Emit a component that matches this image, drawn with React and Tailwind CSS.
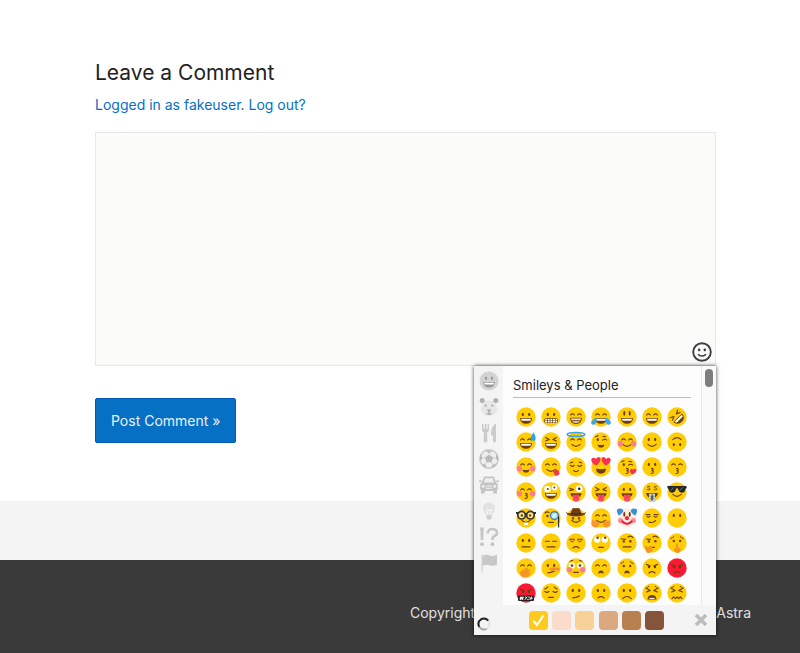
import React, { useState } from 'react';

const BROWN = '#6f3f08';
const YELLOW = '#ffcd05';

const line = {
  fill: 'none',
  stroke: BROWN,
  strokeWidth: 1.15,
  strokeLinecap: 'round',
  strokeLinejoin: 'round',
};

const eyes = {
  dots: (
    <g fill={BROWN}>
      <ellipse cx="6.8" cy="7.4" rx="1.1" ry="1.7" />
      <ellipse cx="13.2" cy="7.4" rx="1.1" ry="1.7" />
    </g>
  ),
  tall: (
    <g fill={BROWN}>
      <ellipse cx="7.3" cy="6.2" rx="1" ry="2.5" />
      <ellipse cx="12.7" cy="6.2" rx="1" ry="2.5" />
    </g>
  ),
  happy: <path {...line} d="M4.6 8Q6.5 5.6 8.4 8M11.6 8Q13.5 5.6 15.4 8" />,
  closed: <path {...line} d="M4.4 8.4Q6.4 10.4 8.2 8.4M11.8 8.4Q13.6 10.4 15.6 8.4M4.4 6L6.8 5M15.6 6L13.2 5" />,
  squint: <path {...line} d="M4.6 5.6L8.2 7.4L4.6 9M15.4 5.6L11.8 7.4L15.4 9" />,
  wink: (
    <g>
      <ellipse cx="6.8" cy="7.6" rx="1.1" ry="1.6" fill={BROWN} />
      <path {...line} d="M11.6 8.2Q13.4 6.4 15.6 8M4.6 4.8L7 3.8M12 4.4L14.6 4.8" />
    </g>
  ),
  hearts: (
    <g fill="#f9324f">
      <path d="M5.2 8.6C1 6.6-.6 3.6.8 1.6C2.2 0 4.2.8 4.8 2.2C6-.2 8.8-.2 9.4 1.8C9.8 4.4 7.6 7 5.2 8.6Z" />
      <path d="M14.8 8.6C19 6.6 20.6 3.6 19.2 1.6C17.8 0 15.8.8 15.2 2.2C14-.2 11.2-.2 10.6 1.8C10.2 4.4 12.4 7 14.8 8.6Z" />
    </g>
  ),
  crazy: (
    <g>
      <circle cx="6.4" cy="7" r="3.3" fill="#fff" />
      <circle cx="13.6" cy="5.6" r="2.8" fill="#fff" />
      <circle cx="6.8" cy="7" r="1" fill={BROWN} />
      <circle cx="13.4" cy="5.6" r="1" fill={BROWN} />
    </g>
  ),
  winkWide: (
    <g>
      <path {...line} d="M3.6 6.2L7.6 7.6L3.8 8.6" />
      <circle cx="13.2" cy="6.8" r="3.4" fill="#fff" />
      <circle cx="13.2" cy="6.8" r="1.3" fill="#222" />
    </g>
  ),
  money: <path {...line} strokeWidth=".8" d="M8 4.4Q5.4 3.6 5.4 5Q5.6 6 6.800 6Q8.400 6.400 8 7.600Q7.200 8.400 5.200 7.600M14.800 4.400Q12.200 3.600 12.200 5Q12.400 6 13.600 6Q15.200 6.400 14.800 7.600Q14 8.400 12 7.600" />,
  flat: <path {...line} d="M4.4 8.2H8.4M11.6 8.2H15.6" />,
  bored: (
    <g>
      <path {...line} d="M3.8 6.2H8.4M11.6 6.2H16.2" />
      <path {...line} strokeWidth="1" d="M4.4 7.6Q6.2 10.4 8 7.6M12 7.6Q13.8 10.4 15.6 7.6" />
    </g>
  ),
  smirk: <path {...line} d="M4 6.600L8 6.600M5 8.800Q6.600 9.600 8 8.400M16 6.600L12 6.600M12 8.400Q13.400 9.600 15 8.800" />,
  roll: (
    <g>
      <circle cx="6.2" cy="6.6" r="3.2" fill="#fff" />
      <circle cx="13.8" cy="6.6" r="3.2" fill="#fff" />
      <circle cx="6.6" cy="4.7" r="1.2" fill={BROWN} />
      <circle cx="14.2" cy="4.7" r="1.2" fill={BROWN} />
    </g>
  ),
  raised: (
    <g>
      <circle cx="6.8" cy="8.4" r="1.2" fill={BROWN} />
      <circle cx="13.4" cy="8.2" r="1.2" fill={BROWN} />
      <path {...line} d="M4.4 6L8.4 6.4M11 4Q13.6 1.8 16 4.6" />
    </g>
  ),
  worried: (
    <g>
      <circle cx="6.8" cy="8" r="1.2" fill={BROWN} />
      <circle cx="13.2" cy="8" r="1.2" fill={BROWN} />
      <path {...line} strokeWidth="1" d="M3.8 5.6Q5.4 5 6.8 3.6M16.2 5.6Q14.6 5 13.2 3.6" />
    </g>
  ),
  flushed: (
    <g>
      <circle cx="5.8" cy="7.6" r="3.2" fill="#fff" />
      <circle cx="14.2" cy="7.6" r="3.2" fill="#fff" />
      <circle cx="6" cy="7.6" r="1.3" fill={BROWN} />
      <circle cx="14" cy="7.6" r="1.3" fill={BROWN} />
      <path {...line} strokeWidth="1" d="M4 3.2L6.6 2.4M16 3.2L13.4 2.4" />
    </g>
  ),
  sad: <path {...line} d="M3.8 8.4Q5.8 10.4 8 8.4M12 8.4Q14.2 10.4 16.2 8.4M3.8 6Q5.8 5.4 6.8 4M16.2 6Q14.2 5.4 13.2 4" />,
  angry: (
    <g>
      <circle cx="7" cy="9" r="1.2" fill={BROWN} />
      <circle cx="13" cy="9" r="1.2" fill={BROWN} />
      <path {...line} strokeWidth="1.2" d="M4.4 6.4L8.4 8M15.6 6.4L11.6 8" />
    </g>
  ),
};

const mouths = {
  grin: (
    <g>
      <path fill={BROWN} d="M4 11H16Q15.6 16.8 10 16.8Q4.4 16.8 4 11Z" />
      <path fill="#fff" d="M5 11.7H15L14.4 13.8H5.6Z" />
    </g>
  ),
  beam: (
    <g>
      <path fill={BROWN} d="M4 10.8H16Q15.6 17 10 17Q4.4 17 4 10.8Z" />
      <path fill="#f3dfc4" d="M5 11.6H15L14.6 13.2H5.4ZM5.9 14.2H14.1Q12.6 16 10 16Q7.4 16 5.9 14.2Z" />
    </g>
  ),
  grimace: (
    <g>
      <rect x="3.2" y="11" width="13.6" height="5" rx="2" fill={BROWN} />
      <path stroke="#fff" strokeWidth="1.7" strokeDasharray="1.9 .7" d="M4.2 12.5H16M4.2 14.6H16" />
    </g>
  ),
  heartGrin: <path fill={BROWN} d="M5 11.6Q10 12.8 15 11.6Q14.6 16.8 10 16.8Q5.4 16.8 5 11.6Z" />,
  smallGrin: <path fill={BROWN} d="M6.600 12.400Q10 13.400 13.400 12.400Q12.800 15.600 10 15.600Q7.200 15.600 6.600 12.400Z" />,
  smile: <path {...line} d="M5.8 12.4Q10 16.2 14.2 12.4" />,
  small: <path {...line} d="M7.4 13.6Q10 15.4 12.6 13.6" />,
  frown: <path {...line} d="M5.8 15.6Q10 11.4 14.2 15.6" />,
  smallFrown: <path {...line} d="M7 15Q10 12.4 13 15" />,
  open: <path fill={BROWN} d="M7.2 15.4Q7.4 12.4 10 12.4Q12.6 12.4 12.8 15.4Q10 14.4 7.2 15.4Z" />,
  flat: <path {...line} d="M6 13.8H14" />,
  short: <path {...line} d="M7.6 14.4H12.4" />,
  slant: <path {...line} d="M6.8 14.8Q10 14.8 13.4 13" />,
  smirk: <path {...line} d="M6.8 14Q11 15.4 13.6 12.6" />,
  kiss: <path {...line} strokeWidth="1.1" d="M9.4 11.4Q12 11.6 11 13Q10.4 13.6 9.8 13.6Q11.8 13.9 11.2 15.4Q10.6 16.6 9.2 16.4" />,
  tongue: (
    <g>
      <path fill={BROWN} d="M4.4 11.2H15.6Q15 15.6 10 15.6Q5 15.6 4.4 11.2Z" />
      <path fill="#ff4668" d="M6.8 12.8H13.2V16.4Q13 19.6 10 19.6Q7 19.6 6.8 16.4Z" />
      <path stroke="#d62d50" strokeWidth=".8" d="M10 13V17" />
    </g>
  ),
  money: (
    <g>
      <path fill={BROWN} d="M4 11H16Q15 16.4 10 16.4Q5 16.4 4 11Z" />
      <path fill="#c9cdc5" d="M7 11.6H13V20H7Z" />
      <path {...line} stroke="#3d4942" strokeWidth="1" d="M11.2 14.2Q9 13.4 9 14.8Q11.4 15.4 11.2 16.8Q10.4 17.6 8.8 17M10 13V18.2" />
    </g>
  ),
  squiggle: <path {...line} d="M5 15.6L6.8 13.8L8.6 15.6L10.2 13.8L11.8 15.6L13.4 13.8L15 15.6" />,
  weary: (
    <g>
      <path fill={BROWN} d="M5.4 16.4Q6 12 10 12Q14 12 14.6 16.4Z" />
      <path stroke="#fff" strokeWidth="1" d="M7.4 15.4H12.6" />
    </g>
  ),
};

const extras = {
  blush: (
    <g fill="#ff7c8e">
      <circle cx="3.4" cy="11.8" r="2.7" />
      <circle cx="16.6" cy="11.8" r="2.7" />
    </g>
  ),
  tears: (
    <g fill="#35a8ee">
      <path d="M5.4 10.6Q6 17.6 2.6 17.8Q-.8 17.4.6 14.2Q2 12.2 5.4 10.6Z" />
      <path d="M14.6 10.6Q14 17.6 17.4 17.8Q20.8 17.4 19.4 14.2Q18 12.2 14.6 10.6Z" />
    </g>
  ),
  sweat: <path fill="#29a3ef" d="M17.6.4Q21 6.2 19 8.2Q17 9.6 15 7.8Q13.8 5.4 17.6.4Z" />,
  halo: <ellipse cx="10" cy="2.4" rx="8.8" ry="1.9" fill="none" stroke="#39a4e8" strokeWidth="1.5" />,
  heart: <path fill="#f9324f" d="M15.4 17.6Q11.8 14.4 13.2 12.4Q14.8 11.2 16 12.8Q18 10.8 19.4 12.6Q20.2 15.4 15.4 17.6Z" />,
  lick: <path fill="#f9324f" d="M12.2 14.2L15.4 12.2Q18.8 14 18.4 17Q16.8 19.8 13.8 18.2Z" />,
  brows: <path {...line} strokeWidth="1" d="M3.800 5.200Q5.600 4.800 6.800 3.400M16.200 5.200Q14.400 4.800 13.200 3.400" />,
  shades: (
    <g>
      <path fill="#25282b" d="M.4 4H19.6V6L18.4 7Q18 11 14.6 10.8Q11.6 10.6 11 6.6H9Q8.4 10.6 5.4 10.8Q2 11 1.6 7L.4 6Z" />
      <path stroke="#68737b" d="M3.6 8.8L6.4 5.4M12.8 8.8L15.6 5.4" />
    </g>
  ),
  nerd: (
    <g>
      <circle cx="5.6" cy="7.2" r="3.8" fill="#ffe27a" stroke="#333235" strokeWidth="1.7" />
      <circle cx="14.4" cy="7.2" r="3.8" fill="#ffe27a" stroke="#333235" strokeWidth="1.7" />
      <path stroke="#333235" strokeWidth="1.8" d="M0 5H3M17 5H20M9 6H11" />
      <circle cx="5.9" cy="7.4" r="1.2" fill={BROWN} />
      <circle cx="14.1" cy="7.4" r="1.2" fill={BROWN} />
      <path fill="#fff" d="M8 14.5H12V17H8Z" />
    </g>
  ),
  monocle: (
    <g>
      <circle cx="13.4" cy="7.6" r="3.9" fill="#b9e5f9" stroke="#3e7fb0" strokeWidth="1.4" />
      <path stroke="#fff" strokeWidth="1.5" d="M12 9L15 6" />
      <path stroke="#333" strokeWidth="1.2" d="M17.6 8.4V19.6" />
      <path {...line} d="M4 5Q6 3 8 4.6" />
      <circle cx="6.4" cy="8" r="1.2" fill={BROWN} />
    </g>
  ),
  cowboy: (
    <g>
      <path fill="#6d3f1d" d="M0 3.4Q1.6 5.6 4.6 5.2L6.4.4Q8.4-.6 10 .6Q11.6-.6 13.6.4L15.4 5.2Q18.4 5.6 20 3.4Q19.8 8.4 10 8.4Q.2 8.4 0 3.4Z" />
      <path stroke="#3c230e" d="M4.7 5.3Q10 7.2 15.3 5.3" fill="none" />
    </g>
  ),
  hug: (
    <g fill="#f9952b">
      <path d="M1 11.6L3 13.6L4.2 11.4L5.6 13.4L8 14.2Q9 18.4 5.2 19.8Q.6 19.6.2 15.6Z" />
      <path d="M19 11.6L17 13.6L15.8 11.4L14.4 13.4L12 14.2Q11 18.4 14.8 19.8Q19.4 19.6 19.8 15.6Z" />
    </g>
  ),
  clown: (
    <g>
      <path fill="#3b91d4" d="M0 1.4Q4-.6 6.4 2.2Q5.8 5.6 1.8 7.6Q-.6 5 0 1.4ZM20 1.4Q16-.6 13.6 2.2Q14.2 5.6 18.2 7.6Q20.6 5 20 1.4Z" />
      <g fill="#ff8a97">
        <circle cx="3.6" cy="12.4" r="2.5" />
        <circle cx="16.4" cy="12.4" r="2.5" />
      </g>
      <path fill="none" stroke="#e9203f" strokeWidth="2.2" strokeLinecap="round" d="M5.4 13.4Q10 18.4 14.6 13.4" />
      <circle cx="10" cy="10.2" r="2.1" fill="#f02743" />
    </g>
  ),
  think: <path fill="#f59522" d="M3 12.4L5.6 14L11.4 12.8Q12.4 14 9.2 15L11 16.2Q9.8 20 6 20Q3 19.4 3 12.4Z" />,
  shush: <path fill="#f59522" d="M9 10.8Q10.4 10 11 11.6L11.4 14.4L13.6 15.6Q14 19.6 11 20Q7.2 20 7 16L9 14.6Z" />,
  hand: <path fill="#f59522" d="M4 14L9 10.4L12.6 9.4L10.8 12L15 11L12.8 13.4L15.4 13.6L12.8 15.8L14.4 16.4Q11 20 7.4 19.6Q4 18 4 14Z" />,
  nose: <path fill="#f78d2b" d="M8.6 9.8L18 9.6Q19.8 11.2 18 12.6L8.6 12.4Z" />,
  curse: (
    <g>
      <rect x="2" y="12.4" width="16" height="5.6" rx="1" fill="#28201f" />
      <path stroke="#fff" strokeWidth="1" fill="none" d="M5 13.6L4.4 16.8M7 13.6L6.4 16.8M3.8 14.6H7.4M3.6 15.9H7.2M8.8 16.8L11.2 13.6M9 14H9.8M11 16.4H11.8M13 13.6V15.2M13 16V17M15.4 13.6L14.8 16.8M14 15.2H16.6" />
    </g>
  ),
};

// [name, eyes, mouth, extras, options]
const emojis = [
  ['grinning', 'dots', 'grin'],
  ['grimacing', 'dots', 'grimace'],
  ['beaming', 'happy', 'beam'],
  ['tears of joy', 'happy', 'grin', ['tears']],
  ['big eyes', 'tall', 'grin'],
  ['smiling eyes', 'happy', 'grin'],
  ['rolling on the floor', 'squint', 'grin', [], { rotate: -45 }],

  ['sweat', 'happy', 'grin', ['sweat']],
  ['squinting', 'squint', 'grin'],
  ['halo', 'happy', 'smile', ['halo']],
  ['winking', 'wink', 'smallGrin'],
  ['blushing', 'happy', 'smile', ['blush']],
  ['slightly smiling', 'dots', 'smile'],
  ['upside down', 'dots', 'smile', [], { rotate: 180 }],

  ['smiling', 'happy', 'smallGrin', ['blush']],
  ['savoring food', 'happy', 'smile', ['lick']],
  ['relieved', 'closed', 'small'],
  ['heart eyes', 'hearts', 'heartGrin'],
  ['blowing a kiss', 'wink', 'kiss', ['heart']],
  ['kissing', 'dots', 'kiss'],
  ['kissing with smiling eyes', 'happy', 'kiss'],

  ['kissing with closed eyes', 'happy', 'kiss', ['blush']],
  ['zany', 'crazy', 'grin'],
  ['winking with tongue', 'winkWide', 'tongue'],
  ['squinting with tongue', 'squint', 'tongue'],
  ['tongue', 'dots', 'tongue'],
  ['money mouth', 'money', 'money'],
  ['sunglasses', null, 'smile', ['shades']],

  ['nerd', null, 'smile', ['nerd']],
  ['monocle', null, 'short', ['monocle']],
  ['cowboy hat', null, 'smile', ['cowboy'], { lowEyes: true }],
  ['hugging', 'happy', 'smile', ['hug']],
  ['clown', 'tall', null, ['clown'], { color: '#fbeee0' }],
  ['smirking', 'smirk', 'smirk'],
  ['no mouth', 'dots', null],

  ['neutral', 'dots', 'flat'],
  ['expressionless', 'flat', 'flat'],
  ['unamused', 'bored', 'smallFrown'],
  ['rolling eyes', 'roll', 'short'],
  ['raised eyebrow', 'raised', 'flat'],
  ['thinking', 'raised', 'short', ['think']],
  ['shushing', 'worried', null, ['shush']],

  ['hand over mouth', 'happy', null, ['hand']],
  ['lying', 'dots', 'slant', ['nose']],
  ['flushed', 'flushed', 'short', ['blush']],
  ['disappointed', 'happy', 'open'],
  ['worried', 'worried', 'open'],
  ['angry', 'angry', 'smallFrown'],
  ['pouting', 'angry', 'smallFrown', [], { color: '#fa1a35' }],

  ['cursing', 'angry', null, ['curse'], { color: '#fa1a35' }],
  ['pensive', 'sad', 'short'],
  ['confused', 'dots', 'slant'],
  ['slightly frowning', 'dots', 'smallFrown'],
  ['frowning', 'dots', 'frown'],
  ['persevering', 'squint', 'weary', ['brows']],
  ['confounded', 'squint', 'squiggle', ['brows']],
];

const tones = [
  { name: 'Default', color: 'bg-[#ffc91f]' },
  { name: 'Light', color: 'bg-[#fbdccb]' },
  { name: 'Medium light', color: 'bg-[#f7d198]' },
  { name: 'Medium', color: 'bg-[#dba97f]' },
  { name: 'Medium dark', color: 'bg-[#b9804f]' },
  { name: 'Dark', color: 'bg-[#855539]' },
];

const categories = [
  {
    name: 'Smileys & People',
    icon: (
      <g>
        <circle cx="10" cy="10" r="9.5" fill="#d3d3d3" />
        <g fill="#989898">
          <ellipse cx="7" cy="7.3" rx="1.1" ry="1.8" />
          <ellipse cx="13" cy="7.3" rx="1.1" ry="1.8" />
          <path d="M4 11H16Q15.4 16.6 10 16.6Q4.6 16.6 4 11Z" />
        </g>
        <path fill="#fff" d="M5 11.7H15L14.4 13.6H5.6Z" />
      </g>
    ),
  },
  {
    name: 'Animals & Nature',
    icon: (
      <g>
        <path fill="#e7e7e7" d="M4 5Q10 1.6 16 5L18.4 12Q18 18.6 10 18.8Q2 18.6 1.6 12Z" />
        <g fill="#b0b0b0">
          <circle cx="3.2" cy="3.4" r="2.5" />
          <circle cx="16.8" cy="3.4" r="2.5" />
          <circle cx="6.8" cy="8.6" r="1.2" />
          <circle cx="13.2" cy="8.6" r="1.2" />
          <path d="M7.4 12.6H12.6L10.7 15V16Q12.6 17.4 14 15.6Q13.4 18.2 10 18Q6.6 18.2 6 15.6Q7.4 17.4 9.3 16V15Z" />
        </g>
      </g>
    ),
  },
  {
    name: 'Food & Drink',
    icon: (
      <path fill="#cbcbcb" d="M3 1H4.6V6H5.8V1H7.4V6H8.6V1H10V7Q10 9 8 9.4L8.4 18Q8 19.6 6.5 19.6Q5 19.6 4.6 18L5 9.4Q3 9 3 7ZM17 .6V18.6Q16.4 19.6 15.4 19.6Q14 19.4 14 18V12.4H12Q11.6 3.6 17 .6Z" />
    ),
  },
  {
    name: 'Activity',
    icon: (
      <g>
        <circle cx="10" cy="10" r="9.2" fill="#eee" stroke="#c9c9c9" strokeWidth="1.4" />
        <path fill="#b9b9b9" d="M10 5.8L14 8.6L12.5 13.2H7.5L6 8.6ZM6 1.8H14L10 4ZM.8 8L3 5V10L1 12ZM19.2 8L17 5V10L19 12ZM4 14.6L7 16.4L7.4 19Q4.6 18 3.2 16ZM16 14.6L13 16.4L12.6 19Q15.4 18 16.8 16Z" />
        <path stroke="#d0d0d0" d="M10 4V6M3 9.4L6 8.6M17 9.4L14 8.6M7.5 13.2L6 16M12.5 13.2L14 16" />
      </g>
    ),
  },
  {
    name: 'Travel & Places',
    icon: (
      <g>
        <path fill="#c4c4c4" d="M5 1.6H15L17 7.4L18.8 9V14.6H18V18.4H14.4V16H5.6V18.4H2V14.6H1.2V9L3 7.4ZM0 5.4H3V7H0ZM17 5.4H20V7H17Z" />
        <path fill="#efefef" d="M6.2 3.2H13.8L15 7.4H5ZM6.8 10.4H13.2V11.6H6.8ZM6.8 12.8H13.2V13.8H6.8Z" />
        <circle cx="4.2" cy="11.2" r="1.5" fill="#ededed" />
        <circle cx="15.8" cy="11.2" r="1.5" fill="#ededed" />
      </g>
    ),
  },
  {
    name: 'Objects',
    icon: (
      <g>
        <path fill="#e2e2e2" d="M10 1.6Q15.8 2 16 7.6Q15.6 11 13 14H7Q4.4 11 4 7.6Q4.2 2 10 1.6Z" />
        <path fill="#cfcfcf" d="M7.4 14H12.6V17.4L11 18.8H9L7.4 17.4Z" />
        <path fill="none" stroke="#f8f8f8" d="M9 14L7.6 8.4L10 9.6L12.4 8.4L11 14" />
      </g>
    ),
  },
  {
    name: 'Symbols',
    icon: (
      <g>
        <path fill="#c4c4c4" d="M1.2.6H4.8L4.2 13H1.8Z" />
        <path fill="none" stroke="#c6c6c6" strokeWidth="2.6" d="M8.6 6.4Q9 2 13.4 2Q18 2.2 18 5.8Q17.8 8.2 15.2 9.2Q13.4 10 13.4 13" />
        <circle cx="3" cy="17.2" r="1.9" fill="#c4c4c4" />
        <circle cx="13.4" cy="17.2" r="1.9" fill="#c4c4c4" />
      </g>
    ),
  },
  {
    name: 'Flags',
    icon: (
      <g>
        <path stroke="#d4d4d4" strokeWidth="1.4" d="M3 1.5V19.5" />
        <path fill="#c8c8c8" d="M3.6 2.6Q7.4.8 11 2.4Q14.6 3.8 18 1.6V11.6Q14.4 13.8 10.8 12.2Q7.2 10.8 3.6 13Z" />
      </g>
    ),
  },
];

const Emoji = ({ eye, mouth, extra = [], options = {} }) => (
  <svg viewBox="0 0 20 20" className="h-5 w-5 overflow-visible" aria-hidden="true">
    <g transform={options.rotate ? `rotate(${options.rotate} 10 10)` : undefined}>
      <circle cx="10" cy="10" r="9.7" fill={options.color || YELLOW} />
      {options.lowEyes && (
        <g fill={BROWN}>
          <circle cx="7" cy="10.4" r="1.2" />
          <circle cx="13" cy="10.4" r="1.2" />
        </g>
      )}
      {eye && eyes[eye]}
      {mouth && mouths[mouth]}
      {extra.map((name) => (
        <g key={name}>{extras[name]}</g>
      ))}
    </g>
  </svg>
);

const EmojiPicker = ({ onPick, onClose }) => {
  const [tone, setTone] = useState('Default');

  return (
    <div className="absolute right-0 top-full z-10 w-[242px] bg-[#f4f4f4] shadow-[0_0_4px_rgba(0,0,0,0.75)]">
      <div className="flex h-[239px]">
        <nav className="flex w-[29px] flex-col items-center gap-[6px] pt-[5px]">
          {categories.map((category) => (
            <button key={category.name} type="button" aria-label={category.name}>
              <svg viewBox="0 0 20 20" className="h-5 w-5" aria-hidden="true">
                {category.icon}
              </svg>
            </button>
          ))}
        </nav>

        <div className="flex-1 overflow-hidden bg-[#fdfdfd] px-[10px]">
          <h4 className="h-8 border-b border-[#bdbdbd] pt-2 text-[13px] leading-[22px] text-[#222]">
            Smileys &amp; People
          </h4>
          <div className="mt-[6px] grid h-[202px] w-[177px] grid-cols-7 grid-rows-8 place-items-center">
            {emojis.map(([name, eye, mouth, extra, options]) => (
              <button key={name} type="button" aria-label={name} onClick={() => onPick(name)}>
                <Emoji eye={eye} mouth={mouth} extra={extra} options={options} />
              </button>
            ))}
          </div>
        </div>

        <div className="w-[15px] border-l border-[#e6e6e6] bg-[#fafafa] px-[3px] pt-[3px]">
          <div className="h-[18px] w-2 rounded-full bg-[#7d7d7d]" />
        </div>
      </div>

      <div className="flex h-[30px] items-center justify-between pl-[3px] pr-2">
        <svg viewBox="0 0 14 14" className="mt-2 h-[14px] w-[14px]" fill="none" strokeWidth="2" aria-hidden="true">
          <circle cx="7" cy="7" r="5.5" stroke="#e4e4e4" />
          <path stroke="#aaa" d="M2.2 9.8Q5 13.8 9.6 11.9" />
          <path stroke="#222" d="M2.2 9.8Q0 5 3.8 2.5Q8 .2 11.3 3.6" />
        </svg>
        <div className="ml-8 flex w-[136px] justify-between">
          {tones.map((item) => (
            <label key={item.name} className={`relative h-[19px] w-[19px] rounded ${item.color}`}>
              <input
                type="radio"
                name="tone"
                aria-label={item.name}
                checked={tone === item.name}
                onChange={() => setTone(item.name)}
                className="block h-full w-full appearance-none"
              />
              {tone === item.name && (
                <svg viewBox="0 0 19 19" className="pointer-events-none absolute inset-0" fill="none" aria-hidden="true">
                  <path stroke="#fff" strokeWidth="2" strokeLinecap="round" d="M5 10.5L8 14L14 5" />
                </svg>
              )}
            </label>
          ))}
        </div>
        <button type="button" aria-label="Close" onClick={onClose} className="ml-6">
          <svg viewBox="0 0 14 14" className="h-[14px] w-[14px]" aria-hidden="true">
            <path stroke="#bdbdbd" strokeWidth="3.6" d="M2 2L12 12M12 2L2 12" />
          </svg>
        </button>
      </div>
    </div>
  );
};

const App = () => {
  const [comment, setComment] = useState('');
  const [open, setOpen] = useState(true);

  return (
    <div className="flex min-h-screen flex-col bg-white font-['Inter',sans-serif]">
      <main className="pb-[58px] pl-[95px] pr-[84px] pt-[57px]">
        <h3 className="text-[21px] leading-8 text-[#222]">Leave a Comment</h3>
        <p className="mt-1 text-sm leading-6 text-[#3a3a3a]">
          <a href="#profile" className="text-[#0670c4]">Logged in as fakeuser</a>.{' '}
          <a href="#logout" className="text-[#0670c4]">Log out?</a>
        </p>

        <form onSubmit={(e) => e.preventDefault()}>
          <div className="relative mt-[15px]">
            <textarea
              aria-label="Comment"
              value={comment}
              onChange={(e) => setComment(e.target.value)}
              className="block h-[234px] w-full resize-none border border-[#e8e8e8] bg-[#fbfbf9] p-3 text-sm outline-none"
            />
            <button
              type="button"
              aria-label="Insert emoji"
              onClick={() => setOpen(!open)}
              className="absolute bottom-1 right-1"
            >
              <svg viewBox="0 0 20 20" className="h-5 w-5" aria-hidden="true">
                <circle cx="10" cy="10" r="8.8" fill="none" stroke="#3d4043" strokeWidth="1.9" />
                <rect x="6" y="6.6" width="2.4" height="2.6" rx="1" fill="#3d4043" />
                <rect x="11.6" y="6.6" width="2.4" height="2.6" rx="1" fill="#3d4043" />
                <path fill="none" stroke="#3d4043" strokeWidth="1.5" strokeLinecap="round" d="M6.4 12.6Q10 15.4 13.6 12.6" />
              </svg>
            </button>
            {open && (
              <EmojiPicker
                onPick={(name) => setComment(`${comment}:${name}:`)}
                onClose={() => setOpen(false)}
              />
            )}
          </div>

          <button
            type="submit"
            className="mt-8 block h-[45px] rounded-xs border border-[#0259b8] bg-[#0670c4] px-[15px] text-sm text-[#e6f1fa]"
          >
            Post Comment »
          </button>
        </form>
      </main>

      <div className="h-[59px] bg-[#f4f4f4]" />

      <footer className="flex-1 bg-[#3a3a3a] pl-[410px] pr-[49px] pt-10 text-sm leading-[26px] text-[#e0e0e0]">
        <div className="flex justify-between">
          <span>Copyright</span>
          <span>Astra</span>
        </div>
      </footer>
    </div>
  );
};

export default App;
